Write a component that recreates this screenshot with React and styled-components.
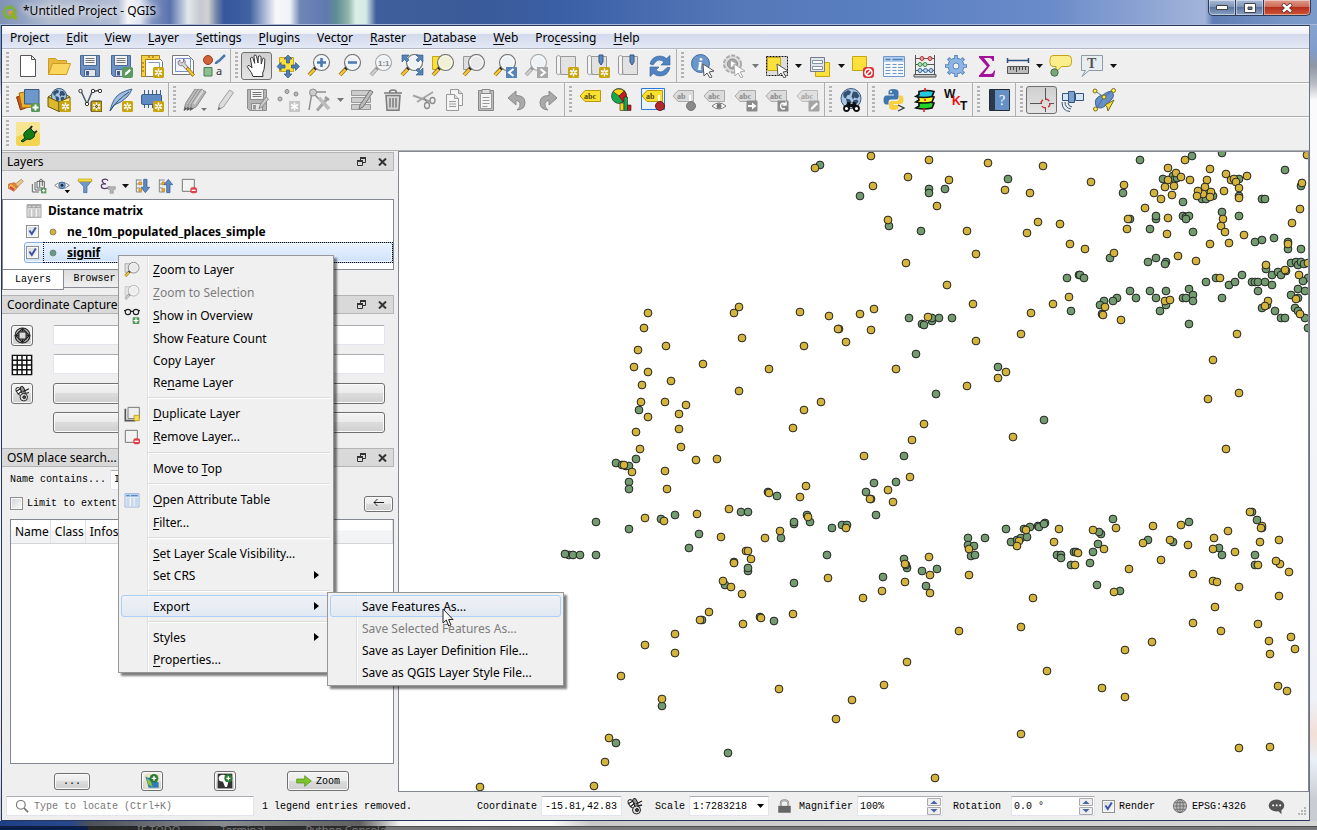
import { styled, createGlobalStyle, css } from "styled-components";

const GlobalStyle = createGlobalStyle`
  * {
    box-sizing: border-box;
  }

  body {
    margin: 0;
    color: #000;
    font-family: "Noto Sans", "Open Sans", sans-serif;
    font-size: 12px;
  }

  button, input, select {
    font: inherit;
    color: inherit;
    margin: 0;
    padding: 0;
  }
`;

const mono = css`
  font-family: "Liberation Mono", "DejaVu Sans Mono", monospace;
  font-size: 10px;
`;

const raised = css`
  border: 1px solid #707070;
  border-radius: 3px;
  background: linear-gradient(#f3f3f3, #ebebeb 49%, #dcdcdc 50%, #cfcfcf);
  box-shadow: inset 0 0 0 1px #fbfbfb;
`;

/* ---------- window frame ---------- */

const Frame = styled.div`
  position: relative;
  display: flex;
  flex-direction: column;
  min-height: 100vh;
  padding: 0 7px 0 1px;
  overflow: hidden;
  background: linear-gradient(
    #8fabd6 0,
    #7f9ccb 50px,
    #8f97a4 66px,
    #b9bdc4 84px,
    #fafafc 100px,
    #eef1f7 700px,
    #f3ded6 735px,
    #eaf0f8 760px,
    #c9ccd2 800px
  );
`;

const TitleBar = styled.header`
  display: flex;
  align-items: flex-start;
  height: 25px;
  margin: 0 -7px 0 -1px;
  padding: 0 6px 0 2px;
  border-bottom: 1px solid #a9b9d6;
  background: linear-gradient(
    90deg,
    #8091b6 0,
    #93a3c2 25px,
    #b3bccf 50px,
    #aab5cf 90px,
    #b5bfd6 118px,
    #f4f6f8 128px,
    #dfe5ef 140px,
    #7f93bf 152px,
    #5a72ac 170px,
    #a3b3d0 180px,
    #e3e8ec 188px,
    #c5cad2 200px,
    #d0d2d4 208px,
    #7888aa 216px,
    #34569b 224px,
    #4163a3 250px,
    #a7b4d2 264px,
    #f6f8fa 276px,
    #eff3f7 290px,
    #6f86b8 300px,
    #5f78b0 326px,
    #5d8d94 336px,
    #8fb3aa 348px,
    #dcefe8 356px,
    #d4eae4 366px,
    #3f5f9c 376px,
    #3a5a98 470px,
    #3b5fa5 560px,
    #5478b8 740px,
    #5b80c2 900px,
    #6a8bc9 1050px,
    #9db0d8 1190px,
    #a2b4da 1205px,
    #5f7db4 1213px,
    #7c9ac9 1300px
  );
`;

const WindowTitle = styled.h1`
  flex: 1;
  margin: 0 0 0 5px;
  font-size: 12px;
  font-weight: 400;
  line-height: 21px;
  text-shadow: 0 0 6px #fff, 0 0 8px #fff;
`;

const WindowButton = styled.button`
  display: flex;
  align-items: center;
  justify-content: center;
  width: ${(p) => (p.$close ? 47 : 28)}px;
  height: 16px;
  border: 1px solid #2c3c5c;
  border-top: 0;
  border-left-width: ${(p) => (p.$first ? 1 : 0)}px;
  border-radius: ${(p) => (p.$close ? "0 0 5px 0" : p.$first ? "0 0 0 5px" : 0)};
  box-shadow: inset 0 0 0 1px #ffffff70;
  background: ${(p) =>
    p.$close
      ? "linear-gradient(#dd9a8c, #cf6a55 45%, #b5301c 50%, #cf5638)"
      : "linear-gradient(#a9bad6, #7f95b9 45%, #5d769f 50%, #8aa1c4)"};
`;

const Client = styled.div`
  flex: 1;
  display: flex;
  flex-direction: column;
  border: 1px solid #26365c;
  border-right-color: #6b7280;
  background: #efefef;
`;

const FrameFoot = styled.div`
  height: 9px;
  margin: 0 -7px 0 -1px;
  padding: 0 0 0 137px;
  display: flex;
  gap: 40px;
  overflow: hidden;
  font-size: 11px;
  line-height: 15px;
  color: #777;
  background: linear-gradient(#ffffff00 5px, #222 5px, #ffffff00 6px),
    linear-gradient(90deg, #1d3f86 0, #27488c 70px, #4c5059 90px, #8a8c8f 220px, #606060 360px, #f2f2f2 400px, #fcfcfc 550px, #c9c9c9 590px, #d6d6d6) 0 0 / 100% 5px no-repeat,
    linear-gradient(90deg, #071d4e 88px, #26282b 88px, #303030 385px, #77777b 386px);

  span {
    padding-top: 1px;
  }
`;

/* ---------- menu bar and toolbars ---------- */

const MenuBar = styled.nav`
  display: flex;
  height: 23px;
  border-bottom: 1px solid #b3b7c4;
  background: linear-gradient(#fdfdfe, #eef1f8 35%, #d3daec 36%, #e2e8f5);
`;

const MenuBarItem = styled.button`
  padding: 1px 9px 0 8px;
  border: 0;
  background: none;
  line-height: 22px;
`;

const Underlined = styled.span`
  text-decoration: underline;
  text-underline-offset: 2px;
`;

const ToolRow = styled.div`
  display: flex;
  height: 34px;
  border-bottom: 1px solid #b0b0b0;
  box-shadow: inset 0 1px #fafafa;
`;

const ToolGroup = styled.div`
  display: flex;
  align-items: center;
  padding-right: 1px;
  border-right: 1px solid ${(p) => (p.$last ? "transparent" : "#b0b0b0")};
`;

const Handle = styled.span`
  width: 3px;
  height: 28px;
  margin: 0 3px 0 4px;
  background: repeating-linear-gradient(#b4b4b4 0 2px, transparent 2px 4px);
`;

const ToolButton = styled.button`
  display: flex;
  align-items: center;
  justify-content: center;
  width: 31px;
  height: 28px;
  border: 1px solid ${(p) => (p.$pressed ? "#6f6f6f" : "transparent")};
  border-radius: 3px;
  background: ${(p) => (p.$pressed ? "linear-gradient(#cfcfcf, #e4e4e4)" : "none")};
`;

const DropButton = styled.button`
  display: flex;
  justify-content: center;
  width: 12px;
  border: 0;
  background: none;
`;

/* ---------- dock ---------- */

const Main = styled.main`
  flex: 1;
  display: grid;
  grid-template-columns: 396px minmax(0, 1fr);
`;

const Dock = styled.aside`
  display: flex;
  flex-direction: column;
  padding: 1px 4px 0 0;
`;

const PanelTitle = styled.h2`
  display: flex;
  align-items: center;
  height: 19px;
  margin: ${(p) => p.$gap || 0}px 0 0;
  padding: 0 0 0 5px;
  border: 1px solid #b4b4b4;
  border-left: 0;
  background: #d9d9d9;
  font-size: 12px;
  font-weight: 400;

  span {
    flex: 1;
  }
`;

const PanelButton = styled.button`
  display: flex;
  justify-content: center;
  width: 21px;
  border: 0;
  background: none;
`;

const PanelTools = styled.div`
  display: flex;
  align-items: center;
  height: 28px;
  padding: 2px 0 0 2px;
`;

const SmallTool = styled.button`
  display: flex;
  justify-content: center;
  width: 23px;
  border: 0;
  background: none;
`;

const Tree = styled.ul`
  height: 71px;
  margin: 0;
  padding: 0 0 0 21px;
  border: 1px solid #828790;
  background: #fff;
  list-style: none;
`;

const TreeRow = styled.li`
  display: flex;
  align-items: center;
  height: 21px;
  padding-left: 1px;
  border: 1px solid transparent;
  font-weight: 700;

  ${(p) =>
    p.$selected &&
    css`
      border-color: #84acdd;
      border-radius: 3px;
      background: linear-gradient(#eaf3ff, #cfe3fc);
      text-decoration: underline;
      box-shadow: inset 0 0 0 1px #f4f9ff;
    `}
`;

const FocusArea = styled.span`
  flex: 1;
  display: flex;
  align-items: center;
  gap: 10px;
  height: 19px;
  margin-left: 5px;
  padding-left: 5px;
  outline: ${(p) => (p.$focused ? "1px dotted #000" : "none")};
`;

const TableLabel = styled.span`
  margin-left: 6px;
`;

const Check = styled.input`
  appearance: none;
  flex: none;
  width: 13px;
  height: 13px;
  border: 1px solid #8e8f8f;
  background: linear-gradient(135deg, #cfd4da, #fafafa);
  box-shadow: inset 0 0 0 1px #f8f8f8;

  &:checked {
    background: url("data:image/svg+xml,%3Csvg xmlns='http://www.w3.org/2000/svg' viewBox='0 0 11 11'%3E%3Cpath d='M2.5 4.5l2.3 3.5L8.8 1.5' fill='none' stroke='%233c54a4' stroke-width='2'/%3E%3C/svg%3E"),
      linear-gradient(135deg, #d6dade, #fafafa);
  }
`;

const Tabs = styled.div`
  display: flex;
  align-items: flex-start;
`;

const Tab = styled.button`
  ${mono}
  width: ${(p) => (p.$active ? 62 : 62)}px;
  height: ${(p) => (p.$active ? 20 : 18)}px;
  border: 1px solid #898c95;
  border-top: 0;
  border-left-width: ${(p) => (p.$active ? 1 : 0)}px;
  background: ${(p) => (p.$active ? "#fff" : "linear-gradient(#dcdcdc, #f0f0f0)")};
`;

const CaptureForm = styled.div`
  display: grid;
  grid-template-columns: 22px 1fr;
  column-gap: 20px;
  row-gap: 8px;
  padding: 11px 9px 0 9px;
`;

const SquareButton = styled.button`
  ${(p) => (p.$flat ? "border: 0; background: none;" : raised)}
  display: flex;
  align-items: center;
  justify-content: center;
  width: 22px;
  height: 21px;
`;

const Field = styled.input`
  ${mono}
  width: ${(p) => p.$width || "100%"};
  height: 20px;
  padding: 0 3px;
  border: 1px solid #e2e5ee;
  border-top-color: #abadb3;
  border-radius: 2px;
  background: #fff;
`;

const WideButton = styled.button`
  ${raised}
  grid-column: 2;
  height: 21px;
`;

const SearchRow = styled.div`
  ${mono}
  display: flex;
  align-items: center;
  gap: 4px;
  height: 24px;
  padding: 1px 1px 0 8px;

  label {
    flex: ${(p) => (p.$spread ? 1 : "none")};
  }
`;

const BackButton = styled.button`
  ${raised}
  width: 29px;
  height: 16px;
`;

const ResultBox = styled.div`
  flex: 1;
  margin: 4px 0 0 8px;
  border: 1px solid #828790;
  background: #fff;
`;

const ResultTable = styled.table`
  width: 100%;
  border-collapse: collapse;

  tr {
    background: linear-gradient(#fff 45%, #f3f4f6 46%, #f1f2f4);
  }

  th {
    height: 23px;
    padding: 0 1px 0 4px;
    border-right: 1px solid #dfe0e3;
    border-bottom: 1px solid #d5d5d5;
    font-weight: 400;
    text-align: left;
  }
`;

const DockFooter = styled.div`
  ${mono}
  display: flex;
  align-items: center;
  height: 28px;
  padding: 6px 45px 0 52px;
  justify-content: space-between;
`;

const FooterButton = styled.button`
  ${raised}
  display: flex;
  align-items: center;
  justify-content: center;
  gap: 4px;
  width: ${(p) => p.$width}px;
  height: ${(p) => p.$height || 20}px;
`;

const MapCanvas = styled.svg`
  display: block;
  width: 100%;
  height: 100%;
  min-height: 0;
  border: 1px solid #828790;
  background: #fff;
`;

/* ---------- status bar ---------- */

const StatusBar = styled.footer`
  ${mono}
  display: flex;
  align-items: center;
  height: 28px;
  padding: 0 2px 0 4px;
`;

const LocatorBox = styled.label`
  display: flex;
  align-items: center;
  gap: 5px;
  width: 248px;
  height: 20px;
  padding-left: 8px;
  border: 1px solid #e2e5ee;
  border-top-color: #abadb3;
  background: #fff;

  input {
    flex: 1;
    min-width: 0;
    border: 0;
    background: none;
  }

  input::placeholder {
    color: #777;
    opacity: 1;
  }
`;

const Message = styled.span`
  flex: 1;
  padding-left: 8px;
`;

const StatusItem = styled.label`
  display: flex;
  align-items: center;
  gap: 4px;
  margin-right: ${(p) => p.$after || 0}px;
`;

const StatusButton = styled.button`
  display: flex;
  align-items: center;
  gap: 4px;
  margin-right: ${(p) => p.$after || 0}px;
  border: 0;
  background: none;
`;

const ScaleSelect = styled.select`
  appearance: none;
  width: 80px;
  height: 20px;
  padding: 0 3px;
  border: 1px solid #e2e5ee;
  border-top-color: #abadb3;
  background: url("data:image/svg+xml,%3Csvg xmlns='http://www.w3.org/2000/svg' width='7' height='4'%3E%3Cpath d='M0 0h7L3.5 4z'/%3E%3C/svg%3E")
    right 4px center no-repeat #fff;
`;

const SpinBox = styled.span`
  display: flex;
  align-items: center;
  width: ${(p) => p.$width}px;
  height: 20px;
  padding-right: 1px;
  border: 1px solid #e2e5ee;
  border-top-color: #abadb3;
  background: #fff;

  input {
    flex: 1;
    min-width: 0;
    padding-left: 2px;
    border: 0;
  }
`;

/* ---------- popup menus ---------- */

const Popup = styled.div`
  position: absolute;
  left: ${(p) => p.$left}px;
  top: ${(p) => p.$top}px;
  width: ${(p) => p.$width}px;
  padding: 2px;
  border: 1px solid #979797;
  background: linear-gradient(90deg, transparent 28px, #dfdfdf 28px, #dfdfdf 29px, #fff 29px, #fff 30px, transparent 30px), #f0f0f0;
  box-shadow: 3px 3px 2px #00000080;
`;

const PopupItem = styled.button`
  display: flex;
  align-items: center;
  width: 100%;
  height: ${(p) => (p.$tall ? 23 : 22)}px;
  padding: 0 11px 0 2px;
  border: 1px solid ${(p) => (p.$hover ? "#aecff7" : "transparent")};
  border-radius: 3px;
  background: ${(p) => (p.$hover ? "linear-gradient(#eef2f8cc, #dfe7f2cc)" : "none")};
  color: ${(p) => (p.$disabled ? "#7d7d7d" : "#000")};
  text-align: left;
  white-space: nowrap;
`;

const PopupIcon = styled.span`
  flex: none;
  display: flex;
  width: 29px;
`;

const PopupText = styled.span`
  flex: 1;
`;

const PopupRule = styled.hr`
  height: 2px;
  margin: 4px 1px 3px 27px;
  border: 0;
  border-top: 1px solid #dcdcdc;
  border-bottom: 1px solid #fff;
`;

const Pointer = styled.svg`
  position: absolute;
  left: 442px;
  top: 608px;
`;

/* ---------- icon parts ---------- */

const Star = () => (
  <g>
    <rect x="13" y="13" width="11" height="11" rx="1.5" fill="#c9a40c" />
    <path d="M18.5 14.5v8M15 16.5l7 4M22 16.5l-7 4" stroke="#fff" strokeWidth="1.5" />
    <circle cx="18.5" cy="18.5" r="1" fill="#c9a40c" />
  </g>
);

const Lens = ({ dim, tint = "#eef2f5", cx = 14.5 }) => (
  <g>
    <path d={`M${cx - 6} 14L${cx - 12.5} 21`} stroke={dim ? "#a0a0a0" : "#8a7434"} strokeWidth="4" />
    <path d={`M${cx - 7} 15.5L${cx - 12.5} 21`} stroke={dim ? "#ccc" : "#fbc62d"} strokeWidth="2.4" />
    <path d={`M${cx - 5} 13L${cx - 7} 15`} stroke={dim ? "#888" : "#111"} strokeWidth="3" />
    <circle cx={cx} cy="8.5" r="8" fill={tint} stroke={dim ? "#aaa" : "#777"} strokeWidth="1.2" />
    <circle cx={cx} cy="8.5" r="6.4" fill="none" stroke="#fff" strokeOpacity=".7" />
  </g>
);

const Cursor = ({ dim }) => (
  <path d="M12 10l11 7-5 1 3 5-2 1-3-5-3 3z" fill="#fff" stroke={dim ? "#aaa" : "#555"} />
);

const Floppy = ({ dim }) => (
  <g stroke={dim ? "#8c8c8c" : "#4c6a93"}>
    <path d="M2.5 1.5h19v21h-17l-2-2z" fill={dim ? "#b5b5b5" : "#6d93c6"} />
    <path d="M5.5 1.5h13v10h-13z" fill="#f4f4f4" />
    <path d="M7.5 4.500h9M7.5 6.500h9M7.5 8.500h9" stroke="#777" />
    <path d="M6.5 15.5h11v7h-11z" fill="#e4e4e4" />
    <path d="M8 17h3v4.5h-3z" fill={dim ? "#999" : "#3d5f94"} stroke="none" />
  </g>
);

const Tag = ({ dim, text = "abc" }) => (
  <g>
    <path d="M1 8l5-5.5h15.5v11H6z" fill={dim ? "#dcdcdc" : "#fbe02d"} stroke={dim ? "#aaa" : "#b79a0c"} />
    <text x="5" y="11" fontSize="8" fontWeight="700" fontFamily="Liberation Serif, serif" fill={dim ? "#888" : "#4c4418"}>
      {text}
    </text>
  </g>
);

const Pencil = ({ x = 0 }) => (
  <g transform={`translate(${x} 0)`}>
    <path d="M2 22.500l1.500-7L13 1l5 3L8.500 18.500z" fill="#b4b4b4" stroke="#8c8c8c" />
    <path d="M6 16L15 2.500" stroke="#dedede" strokeWidth="1.500" />
    <path d="M2 22.500l.8-3.500 2.500 1.700z" fill="#555" />
  </g>
);

const Scroll = () => (
  <g stroke="#999">
    <path d="M4.5 2.5h16v18H6z" fill="#e2e2e2" />
    <path d="M1.5 2.5q2-2 4 0v17q-2 2.5-4 0z" fill="#f5f5f5" />
    <path d="M5.5 20.5h15" />
  </g>
);

const Ribbon = ({ x }) => <path d={`M${x} 1h4v7l-2 3-2-3z`} fill="#5d88bf" stroke="#33557f" />;

const Sheet = ({ x = 0, y = 0, children }) => (
  <g transform={`translate(${x} ${y})`}>
    <path d="M1.5 1.5h8l4 4v12h-12z" fill="#f4f4f4" stroke="#999" />
    <path d="M9.5 1.5v4h4" fill="#ddd" stroke="#999" />
    {children}
  </g>
);

const Bee = ({ fill = "#fff" }) => (
  <g stroke="#222" strokeWidth="1">
    <ellipse cx="6" cy="6" rx="2.7" ry="5" transform="rotate(-40 6 6)" fill={fill} />
    <ellipse cx="9.5" cy="5" rx="2" ry="4.5" transform="rotate(-20 9 5)" fill="#999" />
    <path d="M2 6l5-3M4 9l5-4M10 6l6-3M12 8l4-1" strokeWidth="1.3" />
    <circle cx="10.5" cy="12" r="4" fill="#ddd" />
    <circle cx="11" cy="12" r="1.5" fill="#444" />
  </g>
);

const TableGrid = ({ head = "#8fb5de", line = "#6f98c6", body = "#f5f9fd" }) => (
  <g>
    <path d="M1.5 2.5h21v19h-21z" fill={body} stroke={line} />
    <path d="M2 3h20v5H2z" fill={head} />
    <path d="M3.5 5.5h4M9.5 5.5h5M16.5 5.5h4" stroke="#fff" />
    <path d="M3.5 10.5h4M9.5 10.5h5M16.5 10.5h4M3.5 13.5h4M9.5 13.5h5M16.5 13.5h4M3.5 16.5h4M9.5 16.5h5M16.5 16.5h4M3.5 19.5h4M9.5 19.5h5M16.5 19.5h4" stroke={line} />
  </g>
);

const Globe = ({ cx = 12, cy = 12, r = 10, color = "#28425f", fill = "#7fa4cf" }) => (
  <g fill="none" stroke={color}>
    <circle cx={cx} cy={cy} r={r} fill={fill} />
    <ellipse cx={cx} cy={cy} rx={r / 2} ry={r} />
    <path d={`M${cx - r} ${cy}h${2 * r}M${cx} ${cy - r}v${2 * r}M${cx - r + 1.5} ${cy - r / 2}h${2 * r - 3}M${cx - r + 1.5} ${cy + r / 2}h${2 * r - 3}`} />
  </g>
);

const WorldMap = ({ cx, cy, r }) => (
  <g>
    <circle cx={cx} cy={cy} r={r} fill="#a9c6e6" stroke="#3b5778" />
    <g transform={`translate(${cx - r} ${cy - r}) scale(${r / 10})`} fill="#34506f">
      <path d="M3 4l4-2.500 3 1.500-1 3-3 1-1 3-2-1-1-3z" />
      <path d="M5 10l4 1 1.500 3-2 4-2-1z" />
      <path d="M12 3l4 .5 2.500 4-2 2.500-3-1-1.500 2-1.500-3z" />
      <path d="M12 12l4-1 1.500 2-3 4-2-1z" />
    </g>
  </g>
);

const GreyBadge = ({ children }) => (
  <g>
    <rect x="12.5" y="12.5" width="11" height="11" rx="1" fill="#8b8b8b" />
    {children}
  </g>
);

const icons = {
  newFile: <path d="M4.5 1.5h11l4 4v17h-15zM15.5 1.5v4h4" fill="#fff" stroke="#555" />,
  open: (
    <g stroke="#c99d28">
      <path d="M1.5 20.5v-16h7l2 2h9v14z" fill="#eab93a" />
      <path d="M1.5 20.5l4-11h18l-4 11z" fill="#fbd65e" />
    </g>
  ),
  save: <Floppy />,
  saveAs: (
    <g>
      <Floppy />
      <rect x="13" y="13" width="11" height="11" rx="2" fill="#5a9a5f" />
      <path d="M15.5 21.5l1-3 4-3.5 1.5 1.5-4 4z" fill="#fff" />
    </g>
  ),
  layout: (
    <g>
      <path d="M1.5 1.5h15l6 6v15h-21z" fill="#fff" stroke="#777" />
      <path d="M1.5 1.5h18v4h-14v17h-4z" fill="#f6cf45" stroke="#a8851c" />
      <path d="M2 9h2M2 13h2M2 17h2M9 2v2M13 2v2" stroke="#7a6013" />
      <path d="M8.5 8.5h11v8" stroke="#8b9cc0" fill="none" />
      <Star />
    </g>
  ),
  layoutManager: (
    <g>
      <path d="M1.5 1.5h16l5 5v14h-21z" fill="#fff" stroke="#777" />
      <path d="M4.5 4.5h15v13h-15z" fill="#f4f6ff" stroke="#7a90c8" />
      <path d="M9 6q-3 1-1.500 4.500 1.500 2 4 1l3.500 4 2.500-2-3.500-4q1-3-1.500-4.500v3l-2 1-1.500-1.500z" fill="#d7d7d7" stroke="#666" strokeWidth=".8" />
      <path d="M15 15l6.500 7.500 2-2L17 13z" fill="#f4c430" stroke="#9b7a14" />
    </g>
  ),
  style: (
    <g>
      <circle cx="6" cy="6" r="4.5" fill="#d3623a" stroke="#93401f" />
      <path d="M2 13.5h8v8.5h-8z" fill="#8dbf93" stroke="#46794c" />
      <path d="M14 10q0-2 3-3l6-6" stroke="#4c78ad" strokeWidth="2.5" fill="none" />
      <text x="14" y="21" fontSize="11" fontFamily="Noto Sans, sans-serif" fill="#333">a</text>
    </g>
  ),
  hand: (
    <path
      d="M8 22.5q-1-4-5-8.5-1.5-2 0-2.5t4 2.5L5.5 5q0-1.5 1-1.7t1.5 1l1.7 5L9 2.500Q9 1 10 1t1.500 1.200L13 9l.3-6q.2-1.300 1.300-1.200T16 3l.3 7 1.200-5q.4-1 1.300-.8t1 1.300q0 6-.8 10l-1.300 3.500.3 3.500z"
      fill="#fff"
      stroke="#333"
    />
  ),
  panTo: (
    <g>
      <path d="M3.5 3.5h14v14h-14z" fill="#fbe13a" stroke="#c8a613" />
      <path d="M12 1l4 4h-2.500v4h-3V5H8zM12 24l4-4h-2.500v-4h-3v4H8zM1 12.500l4-4V11h4v3H5v2.500zM23.500 12.500l-4-4V11h-4v3h4v2.500z" fill="#4f7fb7" stroke="#2f5380" strokeWidth=".7" />
    </g>
  ),
  zoomIn: (
    <g>
      <Lens />
      <path d="M14.5 4v9M10 8.5h9" stroke="#4a78b0" strokeWidth="2.5" />
    </g>
  ),
  zoomOut: (
    <g>
      <Lens />
      <path d="M10 8.5h9" stroke="#4a78b0" strokeWidth="2.5" />
    </g>
  ),
  zoomNative: (
    <g>
      <Lens dim />
      <text x="9" y="12" fontSize="8" fontWeight="700" fontFamily="Liberation Sans, sans-serif" fill="#888">1:1</text>
    </g>
  ),
  zoomFull: (
    <g>
      <Lens />
      <path d="M2 1h7L6.500 3.500 9 6 7 8 4.500 5.500 2 8zM23 1h-7l2.500 2.500L16 6l2 2 2.500-2.500L23 8zM23 21h-7l2.500-2.500L16 16l2-2 2.500 2.500L23 14z" fill="#5483bc" stroke="#2f5380" strokeWidth=".6" />
    </g>
  ),
  zoomSelection: (
    <g>
      <path d="M1.5 2.5h13v13h-13z" fill="#fbe13a" stroke="#c8a613" />
      <Lens tint="#f1f0d4" />
    </g>
  ),
  zoomLayer: (
    <g>
      <path d="M1.5 2.5h13v13h-13z" fill="#dedede" stroke="#999" />
      <Lens tint="#e9e9e9" />
    </g>
  ),
  zoomLast: (
    <g>
      <Lens />
      <rect x="13" y="13" width="11" height="11" fill="#5584bb" />
      <path d="M20.5 15l-4.5 3.5 4.5 3.5" stroke="#fff" strokeWidth="2" fill="none" />
    </g>
  ),
  zoomNext: (
    <g>
      <Lens dim />
      <rect x="13" y="13" width="11" height="11" fill="#a8a8a8" />
      <path d="M16.5 15l4.5 3.5-4.5 3.5" stroke="#fff" strokeWidth="2" fill="none" />
    </g>
  ),
  newMapView: (<g><Scroll /><Star /></g>),
  newBookmark: (<g><Scroll /><Ribbon x={13} /><Star /></g>),
  bookmarks: (<g><Scroll /><Ribbon x={13} /></g>),
  refresh: (
    <g fill="#4f83c2" stroke="#2f6099" strokeWidth=".6">
      <path d="M2 10Q4 2 12 2q4 0 6.500 2.500L22 1.500V11h-9l3-3q-5-4-9 .5L5 11z" />
      <path d="M22 13.500Q20 22 12 22q-4 0-6.500-2.500L2 22.500V13h9l-3 3q5 4 9-.5l2-2z" />
    </g>
  ),
  identify: (
    <g>
      <circle cx="9.5" cy="9.5" r="9" fill="#6b96c9" stroke="#3e6da6" />
      <text x="6.5" y="15.5" fontSize="17" fontWeight="700" fontStyle="italic" fontFamily="Liberation Serif, serif" fill="#fff">i</text>
      <Cursor />
    </g>
  ),
  action: (
    <g>
      <circle cx="10.5" cy="10" r="8.5" fill="#ddd" stroke="#aaa" strokeDasharray="4 1.5" strokeWidth="2" />
      <circle cx="10.5" cy="10" r="5" fill="#aaa" stroke="#888" />
      <path d="M9 7l5 3-5 3z" fill="#fff" />
      <Cursor dim />
    </g>
  ),
  select: (
    <g>
      <path d="M1.5 2.5h21v19h-21z" fill="#ddd" stroke="#111" strokeDasharray="2 1" />
      <path d="M2.5 3.5h13v13h-13z" fill="#fbe13a" stroke="#c8a613" />
      <Cursor />
    </g>
  ),
  selectForm: (
    <g>
      <path d="M7.5 8.5h14v14h-14z" fill="#fbe13a" stroke="#c8a613" />
      <path d="M2.5 3.5h14v14h-14z" fill="#dfe7ee" stroke="#778" />
      <path d="M4.5 6.5h10v3h-10zM4.5 12.5h10v3h-10z" fill="#fff" stroke="#8592a0" />
    </g>
  ),
  deselect: (
    <g>
      <path d="M1.5 2.5h14v14h-14z" fill="#fbe13a" stroke="#c8a613" />
      <rect x="12" y="13" width="11" height="11" rx="3" fill="#d8343c" />
      <circle cx="17.5" cy="18.5" r="3.5" fill="none" stroke="#fff" strokeWidth="1.5" />
      <path d="M15 21l5-5" stroke="#fff" strokeWidth="1.5" />
    </g>
  ),
  table: (
    <g>
      <path d="M1.5 2.5h21v20h-21z" fill="#f5f9fd" stroke="#6f98c6" />
      <path d="M2 3h20v5H2z" fill="#b3cfec" />
      <path d="M3.5 5.500h5M10.5 5.500h10" stroke="#4f7fb7" strokeWidth="1.500" />
      <path d="M3.5 10.5h5M10.5 10.5h4M16 10.5h5M3.5 13.5h5M10.5 13.5h4M16 13.5h5M3.5 16.5h5M10.5 16.5h4M16 16.5h5M3.5 19.5h5M10.5 19.5h4M16 19.5h5" stroke="#6f98c6" />
    </g>
  ),
  abacus: (
    <g>
      <path d="M2.5 1v20M21.5 1v20M2 4.5h20M2 10.5h20M2 16.5h20" stroke="#555" fill="none" />
      <path d="M1 20.5h22v2.5H1z" fill="#ccc" stroke="#555" />
      <g stroke="#a33" fill="#e99"><circle cx="9" cy="4.5" r="2" /><circle cx="17" cy="4.5" r="2" /></g>
      <g stroke="#3b8a4a" fill="#b5e0b5"><circle cx="7" cy="10.5" r="2" /><circle cx="12" cy="10.5" r="2" /></g>
      <g stroke="#37699b" fill="#b5d3ef"><circle cx="7" cy="16.5" r="2" /><circle cx="12.5" cy="16.5" r="2" /><circle cx="18" cy="16.5" r="2" /></g>
    </g>
  ),
  gear: (
    <g>
      <path d="M12 1v22M1 12h22M4.2 4.2l15.6 15.6M19.8 4.2L4.2 19.8" stroke="#5a86bd" strokeWidth="3.6" />
      <circle cx="12" cy="12" r="8" fill="#8db4e2" stroke="#5a86bd" />
      <path d="M12 2v20M2 12h20M5 5l14 14M19 5L5 19" stroke="#8db4e2" strokeWidth="1.8" />
      <circle cx="12" cy="12" r="3" fill="#efefef" stroke="#5a86bd" />
    </g>
  ),
  sigma: <path d="M4 2h15v5h-1.500q-.5-3-3.500-3H9l6 7.500L8.500 20H15q3 0 4-3.500h1.200L19 23H4v-1.500l8-9L4 3.500z" fill="#a3109a" />,
  measure: (
    <g>
      <path d="M1.5 4v5M22.5 4v5M2 6.5h20" stroke="#2d4f80" strokeWidth="1.5" />
      <path d="M1.5 12.5h21v7h-21z" fill="#bbb" stroke="#555" />
      <path d="M4.5 13v3M7.5 13v3M10.5 13v5M13.5 13v3M16.5 13v3M19.5 13v3" stroke="#444" />
    </g>
  ),
  tips: (
    <g>
      <path d="M4 1.5h15q3.500 0 3.500 4v3q0 4-3.500 4h-6.500l-5.500 6v-6H4q-3 0-3-4v-3q0-4 3-4z" fill="#fbee8d" stroke="#c5a21a" />
      <circle cx="5.5" cy="18.5" r="3.7" fill="#75a877" stroke="#4a6a4c" />
    </g>
  ),
  textNote: (
    <g>
      <path d="M1.5 1.5h21v15H9l-7 6 3.500-6h-4z" fill="#e7eef2" stroke="#8f9aa3" />
      <text x="7" y="14" fontSize="14" fontWeight="700" fontFamily="Liberation Serif, serif" fill="#555">T</text>
    </g>
  ),
  addLayer: (
    <g>
      <path d="M.5 9l10-3 4 12-10 4z" fill="#cc4f23" stroke="#8a3212" />
      <path d="M3 5l12-2 1 16-10 1z" fill="#edb22a" stroke="#9c7312" />
      <path d="M8.5 1.500h14.500v14.500H8.500z" fill="#6e98ca" stroke="#35587f" />
      <rect x="15" y="15" width="9" height="9" rx="1.5" fill="#56975b" />
      <path d="M19.5 16.5v6M16.5 19.5h6" stroke="#fff" strokeWidth="2" />
    </g>
  ),
  geopackage: (
    <g>
      <path d="M1 9l11-7 11 7-11 5z" fill="#e9d168" stroke="#6d5707" />
      <WorldMap cx={12} cy={8} r={7.5} />
      <path d="M1 9l11 5v9.500L1 18.500z" fill="#dcb92c" stroke="#6d5707" />
      <path d="M12 14l11-5v9.500l-11 5z" fill="#fbe97d" stroke="#6d5707" />
      <Star />
    </g>
  ),
  shapefile: (
    <g fill="none" stroke="#333">
      <path d="M3 3l6 13 5-12 8-2" strokeWidth="1.5" stroke="#4a5a6c" />
      <g fill="#fff"><circle cx="2.5" cy="3" r="1.7" /><circle cx="9" cy="16" r="1.7" /><circle cx="15" cy="3" r="1.7" /><circle cx="22" cy="3" r="1.7" /></g>
      <Star />
    </g>
  ),
  feather: (
    <g>
      <path d="M1 23Q4 9 12 5q6-3 11-4-2 5-5 8-6 6-13 8z" fill="#9dbcdf" stroke="#3f6791" />
      <path d="M1 23Q8 12 20 4" stroke="#2f5075" fill="none" />
      <Star />
    </g>
  ),
  memory: (
    <g>
      <path d="M4.5 2v18M8.5 2v18M12.5 2v18M16.5 2v18M20.5 2v18" stroke="#3a5f8f" />
      <rect x="1.5" y="6.5" width="20" height="10" rx="1.5" fill="#5f8bc4" stroke="#3a5f8f" />
      <Star />
    </g>
  ),
  pencils: (<g><Pencil x={-1} /><Pencil x={2} /><Pencil x={5} /><path d="M18 20h6l-3 3z" fill="#777" /></g>),
  pencil: (
    <g>
      <path d="M4 22l1.500-6L15.500 2l4 2.500L9.500 19z" fill="#dcdcdc" stroke="#a0a0a0" />
      <path d="M4 22l.8-3 2 1.300z" fill="#666" />
    </g>
  ),
  saveEdits: (<g><Floppy dim /><path d="M14 21l1-4 6-8 2.5 2-6.5 8z" fill="#ccc" stroke="#888" /></g>),
  addPoints: (
    <g>
      <g fill="#bbb" stroke="#888"><circle cx="4" cy="11" r="2" /><circle cx="11" cy="3.5" r="2" /><circle cx="20" cy="6" r="2" /></g>
      <rect x="13" y="13" width="11" height="11" fill="#c6c6c6" />
      <path d="M18.5 14.5v8M15 16.5l7 4M22 16.5l-7 4" stroke="#fff" strokeWidth="1.5" />
    </g>
  ),
  advanced: (
    <g fill="none" stroke="#8d8d8d">
      <path d="M5 4L2 22M5 4h14M6 5l6 6" strokeWidth="1.5" />
      <circle cx="6" cy="4.5" r="3.500" fill="#ccc" />
      <path d="M10 22.500L20 11" strokeWidth="3" stroke="#a5a5a5" />
      <path d="M12 10l10 11" strokeWidth="3.500" stroke="#bcbcbc" />
      <path d="M18 9l4 3" strokeWidth="2.500" stroke="#9a9a9a" />
    </g>
  ),
  modify: (
    <g>
      <path d="M1.5 2.5h19v5h-19zM1.5 9.5h19v5h-19zM1.5 16.5h19v5h-19z" fill="#ccc" stroke="#999" />
      <path d="M9 21l1-4L20 2l3 2-10 15z" fill="#bbb" stroke="#777" />
    </g>
  ),
  trash: (
    <g fill="none" stroke="#7c7c7c" strokeWidth="1.5">
      <path d="M5 7.5h14l-1 14.7H6z" fill="#d5d5d5" />
      <path d="M3 5h18M8.5 4.5q0-2.500 3.500-2.500t3.500 2.500M9 10v9.500M12 10v9.500M15 10v9.500" />
    </g>
  ),
  cut: (
    <g fill="none" stroke="#8b8b8b" strokeWidth="1.3">
      <path d="M1 7.500l17 6M5 14L21 4" strokeWidth="2" stroke="#a5a5a5" />
      <ellipse cx="20.500" cy="12.500" rx="2.500" ry="3" />
      <ellipse cx="15" cy="17.500" rx="2.500" ry="3" />
      <path d="M12 10l3 4" />
    </g>
  ),
  copy: (
    <g>
      <Sheet x={6} y={0} />
      <Sheet x={2} y={5}><path d="M4 8.500h7M4 11h7M4 13.500h7" stroke="#999" /></Sheet>
    </g>
  ),
  paste: (
    <g>
      <path d="M4.5 2.5h15v20h-15z" fill="#bbb" stroke="#888" />
      <path d="M6.5 5.5h11v15h-11z" fill="#f4f4f4" stroke="#999" />
      <path d="M8 1.5h8v4H8z" fill="#ddd" stroke="#888" />
      <path d="M8.5 9.500h7M8.5 12.500h7M8.5 15.500h7M8.5 18.500h5" stroke="#999" />
    </g>
  ),
  undo: <path d="M3 10l8-7v4.500q9 0 9 7T12 22q4-3 3-6.500T11 12.500V17z" fill="#a9a9a9" stroke="#8a8a8a" />,
  redo: <path d="M21 10l-8-7v4.500q-9 0-9 7T12 22q-4-3-3-6.500t4-3V17z" fill="#a9a9a9" stroke="#8a8a8a" />,
  label: <Tag />,
  diagram: (
    <g stroke="#222" strokeWidth=".6">
      <circle cx="9" cy="8" r="7.5" fill="#17a84b" />
      <path d="M9 8L3 3.500Q8-1.500 14.500 3z" fill="#fbd414" />
      <path d="M9 8l5.500-5Q19 9 13 14z" fill="#d0171d" />
      <path d="M10 15h4v7.500h-4z" fill="#fbd414" />
      <path d="M14 9h3.500v13.500H14z" fill="#17a84b" />
      <path d="M17.500 17h3.500v5.500h-3.500z" fill="#d0171d" />
    </g>
  ),
  pinned: (
    <g>
      <path d="M.5 .5h23v21H.5z" fill="#eaf2fb" stroke="#2b78d6" />
      <Tag text="ab" />
      <path d="M18 7v8" stroke="#fff" strokeWidth="2" />
      <circle cx="19" cy="18" r="4.5" fill="#b3282c" stroke="#7d1416" />
    </g>
  ),
  pin: (<g><Tag dim text="ab" /><path d="M18 7v8" stroke="#fff" strokeWidth="2" /><circle cx="19" cy="18" r="4.5" fill="#8a8a8a" stroke="#777" /></g>),
  showLabel: (
    <g>
      <Tag dim />
      <path d="M9 18q7-6 14 0-7 6-14 0z" fill="#fff" stroke="#777" />
      <circle cx="16" cy="18" r="2.5" fill="#777" />
    </g>
  ),
  moveLabel: (<g><Tag dim /><GreyBadge><path d="M14 17h4v-2.500l4.500 3.500-4.500 3.500V19h-4z" fill="#fff" /></GreyBadge></g>),
  rotateLabel: (<g><Tag dim /><GreyBadge><path d="M21 16.500q-5-3-5.500 1.500.5 4 4.500 2.500M21 13.500v3.500h-3.500" fill="none" stroke="#fff" strokeWidth="1.5" /></GreyBadge></g>),
  editLabel: (<g opacity=".75"><Tag dim /><GreyBadge><path d="M14.500 22l1-3 5-4.500 1.500 1.500-5 5z" fill="#fff" /></GreyBadge></g>),
  search: (
    <g>
      <WorldMap cx={12} cy={10.5} r={10} />
      <path d="M5 21l3.500-7H11v2h2.500v-2H16l3.500 7-5 1-1.500-3h-2l-1 3z" fill="#111" />
      <g fill="#fff" stroke="#111" strokeWidth="1.8"><circle cx="7.5" cy="20.5" r="2.5" /><circle cx="17.500" cy="20.5" r="2.5" /></g>
    </g>
  ),
  python: (
    <g transform="translate(1 0)">
      <path d="M10 1Q5.500 1 5.500 4v2.500H11v1H3.500q-3 0-3 4.500t3 4.500h2v-2.500q0-2.500 2.500-2.500h5q2.500 0 2.500-2.500V4Q15.500 1 10 1z" fill="#3e76ad" />
      <path d="M11 22q4.500 0 4.500-3v-2h-5v-1H17.500q3 0 3-4.500t-3-4h-1.500v3q0 2.500-2.500 2.500h-5Q6 13 6 15.500V19q0 3 5 3z" fill="#fbd03e" />
      <circle cx="8" cy="3.800" r="1" fill="#fff" />
      <path d="M15 17l6 3-6 3" fill="none" stroke="#333" strokeWidth="1.3" />
    </g>
  ),
  mmqgis: (
    <g stroke="#111" strokeWidth="1.7">
      <path d="M6 15q8-2 15 0l-2 5q-8 2-16 0l3-2z" fill="#23d32a" />
      <path d="M5 9q9-2 16 0l-2 5q-8 2-16 0l3-2z" fill="#f8f128" />
      <path d="M6 3.500q8-2 15 0l-2 5q-8 2-16 0l3-2z" fill="#22c8dd" />
      <path d="M12 0v4M12 11v2M11 20v4" stroke="#e11" strokeWidth="1.5" />
    </g>
  ),
  wkt: (
    <g fontWeight="700" fontFamily="Liberation Sans, sans-serif">
      <text x="0" y="10" fontSize="12" fill="#111">W</text>
      <text x="8" y="17" fontSize="12" fill="#e11">K</text>
      <text x="16" y="22" fontSize="12" fill="#111">T</text>
    </g>
  ),
  help: (
    <g>
      <path d="M2.5 1.5h20v21h-20z" fill="#6590c6" stroke="#222c38" />
      <path d="M3 2h5v20H3z" fill="#2c3a4b" />
      <text x="12" y="17" fontSize="14" fontFamily="Liberation Serif, serif" fill="#fff">?</text>
    </g>
  ),
  crosshair: (
    <g fill="none">
      <path d="M15.5 0v12M15.5 19v5M0 15.5h12M19 15.5h5" stroke="#555" />
      <circle cx="15.5" cy="15.5" r="4.5" stroke="#c33" strokeDasharray="4 3" strokeWidth="1.5" />
    </g>
  ),
  gps: (
    <g stroke="#34567e">
      <path d="M1.5 5.5h7v7h-7zM14.5 5.5h8v7h-8z" fill="#d5e5f4" />
      <path d="M7.5 3.5h6v11h-6z" fill="#7ba0cb" />
      <path d="M1 14q0 9 8 9.500M4 14q0 6 6 7M7 15q0 3 4 4" fill="none" />
    </g>
  ),
  topology: (
    <g>
      <path d="M4 18Q1 9 11 7q3-3 8-4 5 4 0 9-4 3-6 6-5 4-9 0z" fill="#6690c7" stroke="#3d6290" />
      <path d="M13 17l9-5-6 11-1-4z" fill="#f5df3d" stroke="#6e6519" />
      <path d="M4 21l8-12L21 2M3 3l9 6" stroke="#4b6f9e" fill="none" />
      <g fill="#fbf04e" stroke="#77701c"><circle cx="3" cy="3" r="2" /><circle cx="21.5" cy="2.5" r="2" /><circle cx="12" cy="9" r="2" /><circle cx="3.5" cy="21" r="2" /></g>
    </g>
  ),
  plug: (
    <g>
      <rect x="0" y="0" width="24" height="24" rx="3" fill="#f3d552" />
      <path d="M0 3q0-3 3-3h18q3 0 3 3v8Q12 10 0 15z" fill="#f8e591" />
      <path d="M5 19l4-3q-3-4 1-7l4-3 5 5-1 4q-4 4-7 2l-4 3z" fill="#127d17" stroke="#0a3a0c" />
      <path d="M14 7l2-3M18 11l3-2" stroke="#222" strokeWidth="2" />
    </g>
  ),
  brush: (
    <g>
      <path d="M1 9l9-2 5 6-6 7-9-5z" fill="#e8813a" stroke="#c05a26" />
      <path d="M4 9l8 7-3 3-8-5z" fill="#f3c84a" />
      <path d="M2 15l7 4 1-3-6-4z" fill="#c94a4a" />
      <path d="M11 9l9-7 3 3-8 8z" fill="#eac68f" stroke="#9b7a3f" />
    </g>
  ),
  group: (
    <g fill="none" stroke="#666" strokeWidth="1.5">
      <path d="M2 9v12h10M6 6v12h10" />
      <path d="M9 5h11v10H9z" fill="#eee" />
      <path d="M13 14V3q2-3 4 0v9" />
      <rect x="15" y="15" width="8" height="8" fill="#56975b" stroke="none" />
      <path d="M19 16.500v5M16.500 19h5" stroke="#fff" />
    </g>
  ),
  eye: (
    <g>
      <path d="M1 11Q12 2 23 11 12 21 1 11z" fill="#fff" stroke="#888" strokeWidth="1.5" />
      <circle cx="12" cy="11" r="5" fill="#6d99c9" stroke="#3a5f8f" />
      <circle cx="12" cy="11" r="2" fill="#223" />
      <path d="M16 18h8l-4 5z" />
    </g>
  ),
  funnel: (
    <g>
      <path d="M2 4h20l-7 9v9h-5v-9z" fill="#6d99c9" stroke="#3d6799" />
      <path d="M2 1.5h20v4H2z" fill="#f9df3c" stroke="#b99b15" />
    </g>
  ),
  expression: (
    <g>
      <path d="M12 4Q10 1 6 2 2 3 4 6t5 3Q2 8 2 12t5 4 7-3" fill="none" stroke="#5a3a6a" strokeWidth="2" />
      <path d="M12 13h11v4l-3 0v6h-5v-6h-3z" fill="#b5b5b5" stroke="#999" />
    </g>
  ),
  expand: (
    <g>
      <path d="M2 2v19h8M2 9h4M2 3h8M2 15h5" stroke="#888" fill="none" strokeWidth="1.5" />
      <path d="M6 6h4v4H6zM6 16h4v4H6z" fill="#f3b42d" stroke="#b9770f" />
      <path d="M13 2h5v12h4l-6.500 8L9 14h4z" fill="#5c8ac3" stroke="#2f568a" />
    </g>
  ),
  collapse: (
    <g>
      <path d="M2 2v19h8M2 9h4M2 3h8M2 15h5" stroke="#888" fill="none" strokeWidth="1.5" />
      <path d="M6 6h4v4H6zM6 16h4v4H6z" fill="#f3b42d" stroke="#b9770f" />
      <path d="M13 22h5V10h4l-6.500-8L9 10h4z" fill="#5c8ac3" stroke="#2f568a" />
    </g>
  ),
  removeLayer: (
    <g>
      <path d="M2 2h18v18H2z" fill="#f3f3f3" stroke="#777" strokeWidth="1.5" />
      <rect x="14" y="14" width="10" height="9" rx="3" fill="#e0404a" />
      <path d="M16 18.5h6" stroke="#fff" strokeWidth="2" />
    </g>
  ),
  duplicate: (
    <g>
      <path d="M2 4v18h15" fill="none" stroke="#555" strokeWidth="2.5" />
      <path d="M6 2h17v17H6z" fill="#eee" stroke="#777" strokeWidth="1.5" />
      <path d="M15 14h8v8h-8z" fill="#f6dd4b" stroke="#a98d16" />
    </g>
  ),
  overview: (
    <g fill="none" stroke="#222" strokeWidth="1.7">
      <path d="M0 4h3M21 4h3M10 5h4" />
      <circle cx="6" cy="6" r="4" />
      <circle cx="18" cy="6" r="4" />
      <rect x="13" y="14" width="10" height="10" fill="#56975b" stroke="none" rx="1" />
      <path d="M18 15.5v7M14.5 19h7" stroke="#fff" strokeWidth="2" />
    </g>
  ),
  zoomDim: (<g><path d="M1.5 2.5h13v13h-13z" fill="#e4e4e4" stroke="#bbb" /><Lens dim tint="#eee" /></g>),
  matrix: <TableGrid head="#a5a5a5" line="#777" body="#f4f4f4" />,
  crs: (
    <g fill="none" stroke="#222" strokeWidth="1.5">
      <circle cx="12" cy="12" r="10.5" fill="#bbb" />
      <path d="M12 2l10 10-10 10L2 12z" fill="#777" />
      <path d="M7 7h10v10H7zM2 12h4M18 12h4M12 2v4M12 18v4" fill="#ddd" />
    </g>
  ),
  grid: (
    <g fill="#fff" stroke="#111" strokeWidth="1.6">
      <path d="M1.5 1.5h21v21h-21z" />
      <path d="M6.8 1v22M12 1v22M17.2 1v22M1 6.800h22M1 12h22M1 17.200h22" />
    </g>
  ),
  bee: <g transform="scale(1.4)"><Bee /></g>,
  mapAdd: (
    <g>
      <path d="M1 1h22v22H1z" fill="#e9e3c4" />
      <path d="M2 5q4 3 7 2l3 4 10 3v8H7z" fill="#2e7db5" />
      <path d="M4 8l6 4 3 9-7-4z" fill="#8cc04b" />
      <circle cx="15" cy="8" r="6.5" fill="#2c7a35" />
      <path d="M15 4.500v7M11.500 8h7" stroke="#fff" strokeWidth="2" />
    </g>
  ),
  africaAdd: (
    <g>
      <path d="M1 1h22v22H1z" fill="#333" />
      <path d="M4 4q5-3 9 0l7 6-3 4-2 7h-3l-3-8-5-1q-3-4 0-8z" fill="#fff" />
      <circle cx="17" cy="8" r="6" fill="#2c7a35" />
      <path d="M17 5v6M14 8h6" stroke="#fff" strokeWidth="2" />
    </g>
  ),
  logo: (
    <g>
      <circle cx="11.5" cy="12" r="8" fill="none" stroke="#7fae3c" strokeWidth="5" />
      <path d="M12 12l10 10" stroke="#93b023" strokeWidth="5" />
      <path d="M10 10h7l-7 7z" fill="#ee8f28" />
    </g>
  ),
  chat: (
    <g>
      <ellipse cx="12" cy="10.5" rx="11" ry="8.5" fill="#555" />
      <path d="M13 17l6 6v-7z" fill="#555" />
      <path d="M6 10.5h2.500M11 10.5h2.500M16 10.5h2.500" stroke="#fff" strokeWidth="2.5" />
    </g>
  ),
  lock: (
    <g>
      <path d="M6 11V7q0-5 6-5t6 5v4" fill="none" stroke="#888" strokeWidth="3" />
      <path d="M6 11V7q0-5 6-5t6 5v4" fill="none" stroke="#ddd" />
      <path d="M2 11h20v11H2z" fill="#666" />
    </g>
  ),
  globe: <Globe color="#555" fill="#bbb" />,
  arrow: <path d="M1 9h12V4l10 8-10 8v-5H1z" fill="#7cc32c" stroke="#4c8a14" />,
  lens: (
    <g fill="none" stroke="#777" strokeWidth="2">
      <circle cx="10" cy="10" r="7.5" />
      <path d="M15.5 15.5l7 7" strokeWidth="3" />
    </g>
  ),
};

const Icon = ({ name, size = 24 }) => (
  <svg width={size} height={size} viewBox="0 0 24 24" aria-hidden="true">
    {icons[name]}
  </svg>
);

const DownArrow = ({ dim }) => (
  <svg width="7" height="4" viewBox="0 0 7 4" aria-hidden="true">
    <path d="M0 0h7L3.5 4z" fill={dim ? "#777" : "#111"} />
  </svg>
);

const Mnemonic = ({ text }) => {
  const at = text.indexOf("&");
  if (at < 0) return text;
  return (
    <>
      {text.slice(0, at)}
      <Underlined>{text[at + 1]}</Underlined>
      {text.slice(at + 2)}
    </>
  );
};

/* ---------- data ---------- */

const menus = ["Pro&ject", "&Edit", "&View", "&Layer", "&Settings", "&Plugins", "Vect&or", "&Raster", "&Database", "&Web", "Pro&cessing", "&Help"];

// "v" adds a drop-down arrow after the previous button, "d" a dimmed one
const toolRows = [
  [
    ["newFile", "open", "save", "saveAs", "layout", "layoutManager", "style"],
    ["hand", "panTo", "zoomIn", "zoomOut", "zoomNative", "zoomFull", "zoomSelection", "zoomLayer", "zoomLast", "zoomNext", "newMapView", "newBookmark", "bookmarks", "refresh"],
    ["identify", "action", "d", "select", "v", "selectForm", "v", "deselect", "table", "abacus", "gear", "sigma", "measure", "v", "tips", "textNote", "v"],
  ],
  [
    ["addLayer", "geopackage", "shapefile", "feather", "memory"],
    ["pencils", "pencil", "saveEdits", "addPoints", "advanced", "d", "modify", "trash", "cut", "copy", "paste", "undo", "redo"],
    ["label", "diagram", "pinned", "pin", "showLabel", "moveLabel", "rotateLabel", "editLabel"],
    ["search"],
    ["python", "mmqgis", "wkt"],
    ["help"],
    ["crosshair", "gps", "topology"],
  ],
  [["plug"]],
];

const pressed = ["hand", "crosshair"];

const layerMenu = [
  { text: "&Zoom to Layer", icon: "zoomLayer" },
  { text: "&Zoom to Selection", icon: "zoomDim", disabled: true },
  { text: "&Show in Overview", icon: "overview" },
  { text: "Show Feature Count" },
  { text: "Copy Layer" },
  { text: "Re&name Layer" },
  null,
  { text: "&Duplicate Layer", icon: "duplicate" },
  { text: "&Remove Layer...", icon: "removeLayer" },
  null,
  { text: "Move to &Top" },
  null,
  { text: "&Open Attribute Table", icon: "table" },
  { text: "&Filter..." },
  null,
  { text: "&Set Layer Scale Visibility..." },
  { text: "Set CRS", sub: true },
  null,
  { text: "Export", sub: true, hover: true },
  null,
  { text: "Styles", sub: true },
  { text: "&Properties..." },
];

const exportMenu = [
  { text: "Save Features As...", hover: true },
  { text: "Save Selected Features As...", disabled: true },
  { text: "Save as Layer Definition File..." },
  { text: "Save as QGIS Layer Style File..." },
];

const parse = (list) => list.trim().split(/\s+/).map((pair) => pair.split(",").map(Number));

const signif = parse(`
  820,165 1008,179 860,196 929,189 929,193 945,189 889,226 921,231 1067,278 1079,275 1071,311 909,318 922,324 924,325
  932,321 932,318 939,318 952,318 916,354 998,367 936,394 1044,420 904,456
  1140,160 1192,156 1222,153 1285,170 1163,179 1173,176 1175,179 1177,178 1239,179 1123,193 1183,202 1202,199 1206,199
  1213,196 1239,196 1262,199 1265,199 1301,186 1130,219 1156,219 1156,216 1183,216 1186,217 1189,216 1186,219 1222,212
  1239,216 1150,229 1193,232 1110,258 1148,262 1156,258 1166,262 1165,264 1255,242 1262,240 1274,238 1288,242 1288,249
  1301,249 1080,275 1084,278 1130,291 1136,298 1150,291 1156,298 1166,291 1166,305 1160,311 1189,289 1183,298 1186,298
  1193,295 1193,301 1189,324 1206,282 1216,278 1222,298 1229,285 1235,282 1242,275 1252,282 1255,282 1258,282 1265,282
  1272,285 1258,291 1266,269 1272,275 1278,272 1281,275 1286,271 1291,263 1296,262 1298,265 1301,262 1304,264 1308,278
  1303,281 1298,289 1305,291 1291,295 1298,298 1295,308 1298,311 1305,318 1308,328 1262,308 1267,305 1275,311 1281,318
  1285,318 1117,298 1113,301 1104,301 1100,305 1102,314
  874,483 896,482 866,492 871,499 876,515 842,525 847,525 883,577 904,559 907,568 906,565 922,571 937,569 926,586
  968,538 968,545 974,546 971,556 975,555 985,538 1006,529 1011,542 1017,540 1021,538 1024,529 1030,527 1027,537
  1038,526 1039,527 1045,523 1044,524 1057,555 1061,555 1061,558 1074,552 1076,552 1071,565 1093,552 1098,544 1101,534
  1099,532 1113,519 1090,563 1097,585 1120,591 1148,540 1173,542 1189,522 1219,548 1222,555 1252,512 1257,520 1262,528
  1255,555 1255,565
  639,410 636,459 616,463 622,465 626,466 629,466 629,482 629,489 596,522 629,529 661,519 675,515 699,534 689,548
  569,555 565,554 573,555 580,555 596,555 741,512 748,512 768,492 777,496 794,524 794,522 807,515 810,522 781,538
  832,528 827,555 794,583 748,571 748,568 734,562 725,585 702,620 774,621 760,617 662,706 616,743 728,753
`);

const places = parse(`
  815,168 871,156 929,160 988,163 1043,166 908,177 949,180 873,186 1005,190 1030,193 937,206 888,220 967,231 1038,222
  1027,233 1060,224 1070,244 976,254 906,263 947,285 973,304 1053,304 1069,297 1031,313 860,314 874,309 871,330 839,329
  846,342 928,317 1021,334 976,341 896,369 1006,372 998,378 967,386 924,424 912,440 1013,437 864,456 910,477
  1307,155 1185,160 1210,169 1168,168 1176,173 1181,177 1168,180 1190,180 1165,187 1174,186 1154,193 1172,195 1161,199
  1207,180 1205,187 1203,194 1198,191 1197,196 1211,192 1210,197 1224,191 1226,174 1247,176 1231,180 1234,179 1236,182
  1239,188 1239,198 1302,183 1300,209 1292,223 1091,182 1124,185 1145,208 1128,219 1127,229 1085,249 1168,218 1167,234
  1223,219 1221,226 1225,232 1244,235 1210,244 1229,243 1114,253 1178,256 1196,261 1288,244 1266,265 1285,270 1299,275
  1308,263 1220,278 1105,307 1103,315 1121,320 1165,301 1170,300 1268,301 1265,306 1296,299 1300,314 1237,334 1213,360
  1239,393 1208,399 1226,449
  888,490 893,502 870,499 846,528 929,557 905,564 930,575 905,582 882,591 863,598 930,593 969,549 969,575 1026,530
  1019,541 1017,546 1059,529 1054,542 1078,553 1075,565 1093,530 1104,549 1116,528 1129,569 1114,592 1143,543 1153,526
  1161,560 1170,540 1181,525 1188,545 1193,574 1214,538 1213,549 1228,531 1235,552 1213,581 1217,582 1239,587 1250,512
  1262,526 1261,528 1260,542 1279,540 1258,565 1280,564 1276,561 1289,572 1279,596 1215,607 1193,623 1221,631 1258,624
  1269,641 1270,654 1291,637 1295,649 1278,686 1287,691 1239,748 1270,747 1033,598 1021,627 959,631 907,662 884,685
  852,700 1047,671 1125,650 1152,642 1102,688 1125,697 1021,734 935,778
  648,313 644,328 638,350 666,346 634,367 648,372 642,385 671,381 641,402 648,417 665,402 686,405 679,414 636,432
  679,429 640,449 681,447 703,364 739,307 734,313 742,338 739,391 769,369 800,312 829,316 838,329 804,346 821,402
  804,410 793,428 696,460 717,459 665,471 667,489 624,465 632,472 645,518 664,521 697,514 729,509 721,537 769,493
  800,497 806,486 808,517 780,531 765,538 746,551 748,551 751,559 734,563 723,581 731,587 742,594 828,578 709,612
  700,620 761,618 793,614 743,624 675,634 645,645 675,653 621,676 662,699 779,689 836,719 609,738 605,762 594,786
  480,787
`);

/* ---------- components ---------- */

const Tools = ({ names }) =>
  names.map((name, i) =>
    name === "v" || name === "d" ? (
      <DropButton key={i} aria-label="More">
        <DownArrow dim={name === "d"} />
      </DropButton>
    ) : (
      <ToolButton key={i} $pressed={pressed.includes(name)} aria-label={name}>
        <Icon name={name} />
      </ToolButton>
    )
  );

const DockTitle = ({ children, gap }) => (
  <PanelTitle $gap={gap}>
    <span>{children}</span>
    <PanelButton aria-label="Float">
      <svg width="9" height="9" viewBox="0 0 9 9">
        <path d="M3.5 3V.5h5v5H6M.5 3.5h5v5h-5z" fill="none" stroke="#333" />
        <path d="M3 1h6M0 4h6" stroke="#333" strokeWidth="2" />
      </svg>
    </PanelButton>
    <PanelButton aria-label="Close">
      <svg width="9" height="8" viewBox="0 0 9 8">
        <path d="M1 .5l7 7M8 .5l-7 7" stroke="#333" strokeWidth="2" />
      </svg>
    </PanelButton>
  </PanelTitle>
);

const Menu = ({ items, ...place }) => (
  <Popup role="menu" {...place}>
    {items.map((item, i) =>
      item ? (
        <PopupItem key={i} role="menuitem" $tall={Boolean(item.icon)} $hover={item.hover} $disabled={item.disabled}>
          <PopupIcon>{item.icon && <Icon name={item.icon} size={16} />}</PopupIcon>
          <PopupText>
            <Mnemonic text={item.text} />
          </PopupText>
          {item.sub && (
            <svg width="5" height="8" viewBox="0 0 5 8">
              <path d="M0 0l5 4-5 4z" />
            </svg>
          )}
        </PopupItem>
      ) : (
        <PopupRule key={i} />
      )
    )}
  </Popup>
);

const Dots = ({ points, fill }) => (
  <g fill={fill} stroke="#232323">
    {points.map(([x, y], i) => (
      <circle key={i} cx={x} cy={y} r="3.9" />
    ))}
  </g>
);

const SpinArrows = () => (
  <svg width="14" height="17" viewBox="0 0 14 17" aria-hidden="true">
    <path d="M.5 .5h13v7H.5zM.5 9.500h13v7H.5z" fill="#eee" stroke="#aaa" />
    <path d="M3.5 6L7 2.500 10.500 6zM3.500 11L7 14.500 10.500 11z" fill="#4a63a8" />
  </svg>
);

const LayerDot = ({ fill }) => (
  <svg width="8" height="8" viewBox="0 0 8 8">
    <circle cx="4" cy="4" r="3" fill={fill} stroke="#7d7a5c" strokeWidth=".8" />
  </svg>
);

export default function App() {
  return (
    <Frame>
      <GlobalStyle />
      <TitleBar>
        <svg width="16" height="22" viewBox="0 -4 24 28">{icons.logo}</svg>
        <WindowTitle>*Untitled Project - QGIS</WindowTitle>
        <WindowButton $first aria-label="Minimize">
          <svg width="12" height="5"><path d="M.5 .5h11v4H.5z" fill="#fff" stroke="#444" /></svg>
        </WindowButton>
        <WindowButton aria-label="Maximize">
          <svg width="12" height="10"><path d="M.5 .5h11v9H.5zM4 4v2.500h4V4z" fillRule="evenodd" fill="#fff" stroke="#444" /></svg>
        </WindowButton>
        <WindowButton $close aria-label="Close window">
          <svg width="12" height="10" viewBox="0 0 12 10">
            <path d="M1.5 1l9 8M10.500 1l-9 8" stroke="#5a2a2a" strokeWidth="4" />
            <path d="M2 1.500l8 7M10 1.500l-8 7" stroke="#fff" strokeWidth="2.5" />
          </svg>
        </WindowButton>
      </TitleBar>

      <Client>
        <MenuBar>
          {menus.map((text) => (
            <MenuBarItem key={text}>
              <Mnemonic text={text} />
            </MenuBarItem>
          ))}
        </MenuBar>
        {toolRows.map((groups, r) => (
          <ToolRow key={r}>
            {groups.map((names, g) => (
              <ToolGroup key={g} $last={g === groups.length - 1}>
                <Handle />
                <Tools names={names} />
              </ToolGroup>
            ))}
          </ToolRow>
        ))}

        <Main>
          <Dock>
            <DockTitle>Layers</DockTitle>
            <PanelTools>
              {["brush", "group", "eye", "funnel", "expression"].map((name) => (
                <SmallTool key={name} aria-label={name}><Icon name={name} size={16} /></SmallTool>
              ))}
              <DropButton aria-label="More filters"><DownArrow /></DropButton>
              {["expand", "collapse", "removeLayer"].map((name) => (
                <SmallTool key={name} aria-label={name}><Icon name={name} size={16} /></SmallTool>
              ))}
            </PanelTools>
            <Tree>
              <TreeRow>
                <Icon name="matrix" size={16} />
                <TableLabel>Distance matrix</TableLabel>
              </TreeRow>
              <TreeRow>
                <Check type="checkbox" defaultChecked aria-label="ne_10m_populated_places_simple" />
                <FocusArea>
                  <LayerDot fill="#d3ae3c" />
                  ne_10m_populated_places_simple
                </FocusArea>
              </TreeRow>
              <TreeRow $selected>
                <Check type="checkbox" defaultChecked aria-label="signif" />
                <FocusArea $focused>
                  <LayerDot fill="#5f9c94" />
                  signif
                </FocusArea>
              </TreeRow>
            </Tree>
            <Tabs>
              <Tab $active>Layers</Tab>
              <Tab>Browser</Tab>
            </Tabs>

            <DockTitle gap={5}>Coordinate Capture</DockTitle>
            <CaptureForm>
              <SquareButton aria-label="Choose CRS"><Icon name="crs" size={17} /></SquareButton>
              <Field aria-label="Coordinate in chosen CRS" />
              <SquareButton $flat aria-label="Canvas grid"><Icon name="grid" size={22} /></SquareButton>
              <Field aria-label="Coordinate in canvas CRS" />
              <SquareButton aria-label="Track mouse"><Icon name="bee" size={16} /></SquareButton>
              <WideButton aria-label="Copy to clipboard" />
              <WideButton aria-label="Start capture" />
            </CaptureForm>

            <DockTitle gap={15}>OSM place search...</DockTitle>
            <SearchRow>
              <label htmlFor="osm-name">Name contains...</label>
              <Field id="osm-name" $width="200px" defaultValue="I" />
            </SearchRow>
            <SearchRow $spread>
              <Check type="checkbox" id="osm-extent" />
              <label htmlFor="osm-extent">Limit to extent</label>
              <BackButton aria-label="Back">
                <svg width="11" height="7" viewBox="0 0 11 7">
                  <path d="M4.5 0L1 3.500 4.500 7M1 3.500h10" fill="none" stroke="#222" />
                </svg>
              </BackButton>
            </SearchRow>
            <ResultBox>
              <ResultTable>
                <thead>
                  <tr>
                    <th>Name</th>
                    <th>Class</th>
                    <th width="100%">Infos</th>
                  </tr>
                </thead>
              </ResultTable>
            </ResultBox>
            <DockFooter>
              <FooterButton $width={36} $height={17}>...</FooterButton>
              <FooterButton $width={22} aria-label="Add as vector"><Icon name="mapAdd" size={16} /></FooterButton>
              <FooterButton $width={22} aria-label="Add as mask"><Icon name="africaAdd" size={16} /></FooterButton>
              <FooterButton $width={62}><Icon name="arrow" size={16} />Zoom</FooterButton>
            </DockFooter>
          </Dock>
          <MapCanvas viewBox="399 152 909 639" preserveAspectRatio="xMidYMid slice">
            <Dots points={signif} fill="#729b6f" />
            <Dots points={places} fill="#d5b43c" />
          </MapCanvas>
        </Main>

        <StatusBar>
          <LocatorBox>
            <Icon name="lens" size={14} />
            <input placeholder="Type to locate (Ctrl+K)" aria-label="Locator" />
          </LocatorBox>
          <Message>1 legend entries removed.</Message>
          <StatusItem $after={4}>
            Coordinate
            <Field $width="81px" defaultValue="-15.81,42.83" />
          </StatusItem>
          <StatusButton $after={12} aria-label="Toggle extents">
            <svg width="17" height="17" viewBox="0 0 17 17"><Bee /></svg>
          </StatusButton>
          <StatusItem $after={8}>
            Scale
            <ScaleSelect>
              <option>1:7283218</option>
            </ScaleSelect>
          </StatusItem>
          <StatusButton $after={7} aria-label="Lock scale"><Icon name="lock" size={15} /></StatusButton>
          <StatusItem $after={10}>
            Magnifier
            <SpinBox $width={86}>
              <input defaultValue="100%" />
              <SpinArrows />
            </SpinBox>
          </StatusItem>
          <StatusItem $after={7}>
            <span>Rotation&nbsp;</span>
            <SpinBox $width={84}>
              <input defaultValue="0.0 °" />
              <SpinArrows />
            </SpinBox>
          </StatusItem>
          <StatusItem $after={17}>
            <Check type="checkbox" defaultChecked />
            Render
          </StatusItem>
          <StatusButton $after={22}>
            <Icon name="globe" size={16} />
            EPSG:4326
          </StatusButton>
          <StatusButton $after={13} aria-label="Messages"><Icon name="chat" size={17} /></StatusButton>
          <svg width="9" height="20" viewBox="0 0 9 20" aria-hidden="true">
            <path d="M6 12h2M3 15h2M6 15h2M0 18h2M3 18h2M6 18h2" stroke="#b5b5b5" strokeWidth="2" />
          </svg>
        </StatusBar>
      </Client>
      <FrameFoot>
        <span>IF TODO</span>
        <span>Terminal</span>
        <span>Python Console</span>
      </FrameFoot>

      <Menu items={layerMenu} $left={118} $top={255} $width={216} />
      <Menu items={exportMenu} $left={327} $top={592} $width={237} />
      <Pointer width="12" height="20" viewBox="0 0 12 20">
        <path d="M1 1v14l3.300-3 2.400 6 2.300-1-2.400-5.500H11z" fill="#fff" stroke="#222" />
      </Pointer>
    </Frame>
  );
}
